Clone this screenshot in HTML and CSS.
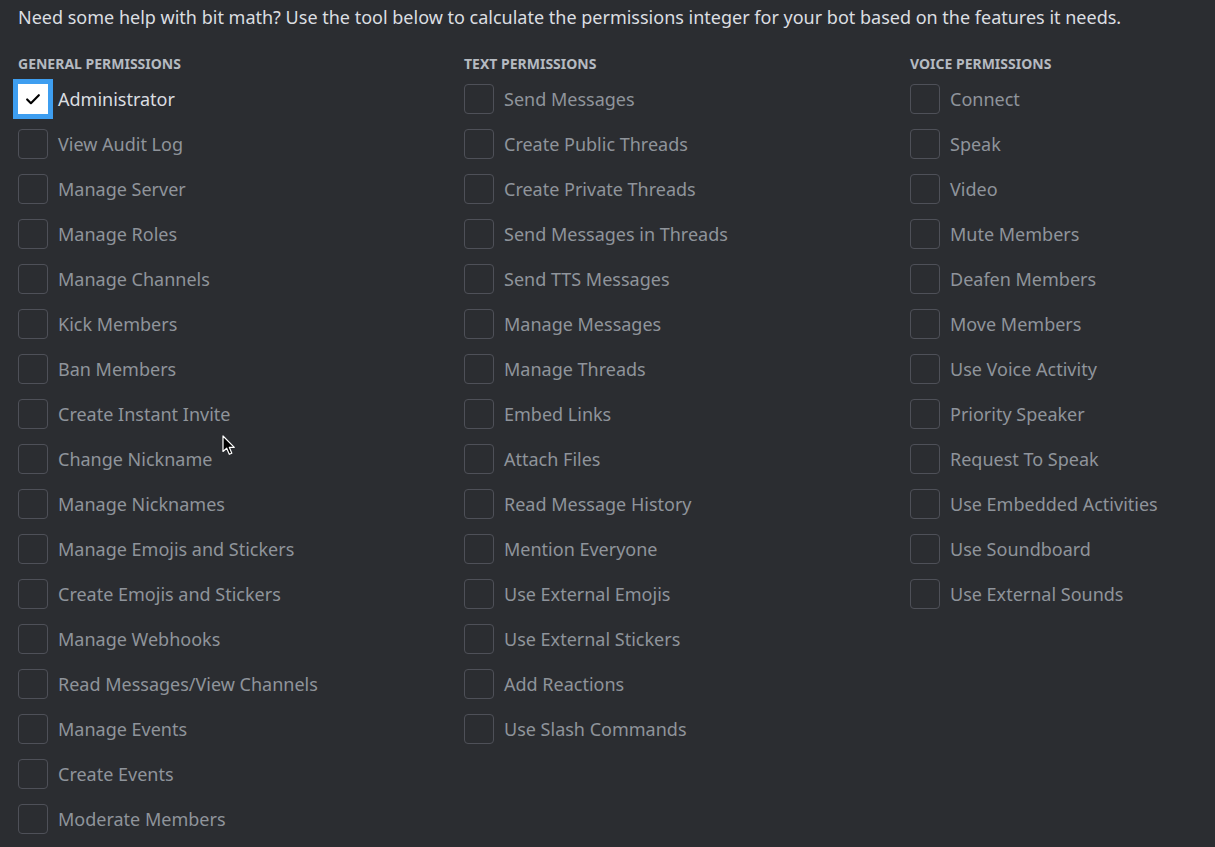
FILE: index.html
```html
<!DOCTYPE html>
<html>
<head>
<meta charset="utf-8">
<link rel="stylesheet" href="styles.css">
</head>
<body>
<div class="page">
  <p class="intro">Need some help with bit math? Use the tool below to calculate the permissions integer for your bot based on the features it needs.</p>
  <div class="columns">
    <section class="col">
      <h3 class="col-title">General Permissions</h3>
      <ul class="perm-list">
        <li class="perm checked"><span class="box"><svg viewBox="0 0 24 24" width="20" height="20"><path d="M5 12.5l4.5 4.5L19 7.5" fill="none" stroke="#000" stroke-width="2.6" stroke-linecap="round" stroke-linejoin="round"/></svg></span><span class="label">Administrator</span></li>
        <li class="perm"><span class="box"></span><span class="label">View Audit Log</span></li>
        <li class="perm"><span class="box"></span><span class="label">Manage Server</span></li>
        <li class="perm"><span class="box"></span><span class="label">Manage Roles</span></li>
        <li class="perm"><span class="box"></span><span class="label">Manage Channels</span></li>
        <li class="perm"><span class="box"></span><span class="label">Kick Members</span></li>
        <li class="perm"><span class="box"></span><span class="label">Ban Members</span></li>
        <li class="perm"><span class="box"></span><span class="label">Create Instant Invite</span></li>
        <li class="perm"><span class="box"></span><span class="label">Change Nickname</span></li>
        <li class="perm"><span class="box"></span><span class="label">Manage Nicknames</span></li>
        <li class="perm"><span class="box"></span><span class="label">Manage Emojis and Stickers</span></li>
        <li class="perm"><span class="box"></span><span class="label">Create Emojis and Stickers</span></li>
        <li class="perm"><span class="box"></span><span class="label">Manage Webhooks</span></li>
        <li class="perm"><span class="box"></span><span class="label">Read Messages/View Channels</span></li>
        <li class="perm"><span class="box"></span><span class="label">Manage Events</span></li>
        <li class="perm"><span class="box"></span><span class="label">Create Events</span></li>
        <li class="perm"><span class="box"></span><span class="label">Moderate Members</span></li>
      </ul>
    </section>
    <section class="col">
      <h3 class="col-title">Text Permissions</h3>
      <ul class="perm-list">
        <li class="perm"><span class="box"></span><span class="label">Send Messages</span></li>
        <li class="perm"><span class="box"></span><span class="label">Create Public Threads</span></li>
        <li class="perm"><span class="box"></span><span class="label">Create Private Threads</span></li>
        <li class="perm"><span class="box"></span><span class="label">Send Messages in Threads</span></li>
        <li class="perm"><span class="box"></span><span class="label">Send TTS Messages</span></li>
        <li class="perm"><span class="box"></span><span class="label">Manage Messages</span></li>
        <li class="perm"><span class="box"></span><span class="label">Manage Threads</span></li>
        <li class="perm"><span class="box"></span><span class="label">Embed Links</span></li>
        <li class="perm"><span class="box"></span><span class="label">Attach Files</span></li>
        <li class="perm"><span class="box"></span><span class="label">Read Message History</span></li>
        <li class="perm"><span class="box"></span><span class="label">Mention Everyone</span></li>
        <li class="perm"><span class="box"></span><span class="label">Use External Emojis</span></li>
        <li class="perm"><span class="box"></span><span class="label">Use External Stickers</span></li>
        <li class="perm"><span class="box"></span><span class="label">Add Reactions</span></li>
        <li class="perm"><span class="box"></span><span class="label">Use Slash Commands</span></li>
      </ul>
    </section>
    <section class="col">
      <h3 class="col-title">Voice Permissions</h3>
      <ul class="perm-list">
        <li class="perm"><span class="box"></span><span class="label">Connect</span></li>
        <li class="perm"><span class="box"></span><span class="label">Speak</span></li>
        <li class="perm"><span class="box"></span><span class="label">Video</span></li>
        <li class="perm"><span class="box"></span><span class="label">Mute Members</span></li>
        <li class="perm"><span class="box"></span><span class="label">Deafen Members</span></li>
        <li class="perm"><span class="box"></span><span class="label">Move Members</span></li>
        <li class="perm"><span class="box"></span><span class="label">Use Voice Activity</span></li>
        <li class="perm"><span class="box"></span><span class="label">Priority Speaker</span></li>
        <li class="perm"><span class="box"></span><span class="label">Request To Speak</span></li>
        <li class="perm"><span class="box"></span><span class="label">Use Embedded Activities</span></li>
        <li class="perm"><span class="box"></span><span class="label">Use Soundboard</span></li>
        <li class="perm"><span class="box"></span><span class="label">Use External Sounds</span></li>
      </ul>
    </section>
  </div>
  <svg class="cursor" width="14" height="21" viewBox="0 0 14 21"><path d="M1 1 L1 16.5 L4.7 13.2 L7.3 19.3 L9.8 18.2 L7.3 12.3 L12.3 12.3 Z" fill="#000" stroke="#fff" stroke-width="1.2" stroke-linejoin="round"/></svg>
</div>
</body>
</html>
```

FILE: styles.css
```css
html, body {
  margin: 0;
  padding: 0;
  background: #2b2d31;
  overflow: hidden;
}
.page {
  position: relative;
  width: 1215px;
  height: 847px;
  padding: 7px 0 0 18px;
  box-sizing: border-box;
  font-family: "Noto Sans", "Open Sans", sans-serif;
}
.intro {
  margin: 0;
  font-size: 18px;
  line-height: 20px;
  color: #dbdee1;
  white-space: nowrap;
}
.columns {
  display: grid;
  grid-template-columns: 446px 446px 1fr;
  margin-top: 29px;
}
.col-title {
  margin: 0 0 12px 0;
  font-size: 14px;
  line-height: 16px;
  font-weight: 700;
  text-transform: uppercase;
  color: #b5bac1;
}
.perm-list {
  list-style: none;
  margin: 0;
  padding: 0;
  display: flex;
  flex-direction: column;
  gap: 15px;
}
.perm {
  display: flex;
  align-items: center;
  gap: 10px;
  height: 30px;
}
.box {
  width: 30px;
  height: 30px;
  box-sizing: border-box;
  border: 1px solid #4e5058;
  border-radius: 4px;
  flex: none;
  display: flex;
  align-items: center;
  justify-content: center;
}
.perm.checked .box {
  background: #fff;
  border-color: #fff;
  border-radius: 0;
  box-shadow: 0 0 0 5px #3e9ef0;
}
.label {
  font-size: 18px;
  line-height: 24px;
  color: #8f949b;
  white-space: nowrap;
}
.perm.checked .label {
  color: #dbdee1;
}
.cursor {
  position: absolute;
  left: 222px;
  top: 435px;
}
```
